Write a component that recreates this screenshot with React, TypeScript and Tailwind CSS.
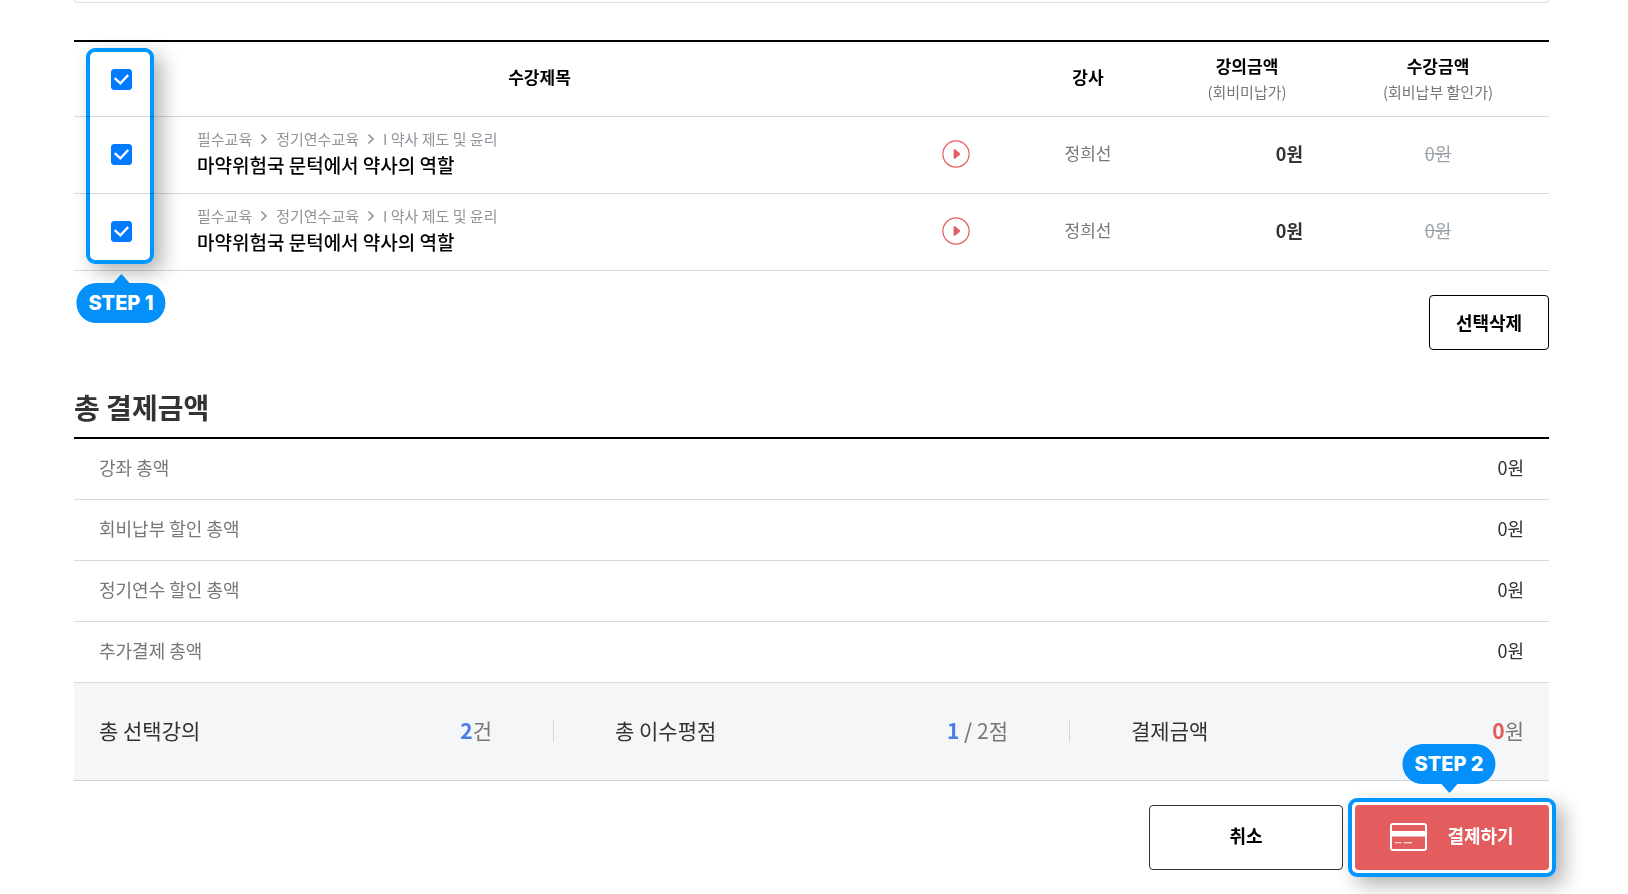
import { useState } from 'react'
import type { ReactNode } from 'react'

interface Course {
  id: number
  path: string[]
  title: string
  teacher: string
  price: string
  memberPrice: string
}

const COURSES: Course[] = [
  {
    id: 1,
    path: ['필수교육', '정기연수교육', 'I 약사 제도 및 윤리'],
    title: '마약위험국 문턱에서 약사의 역할',
    teacher: '정희선',
    price: '0원',
    memberPrice: '0원',
  },
  {
    id: 2,
    path: ['필수교육', '정기연수교육', 'I 약사 제도 및 윤리'],
    title: '마약위험국 문턱에서 약사의 역할',
    teacher: '정희선',
    price: '0원',
    memberPrice: '0원',
  },
]

const TOTALS = [
  { label: '강좌 총액', value: '0원' },
  { label: '회비납부 할인 총액', value: '0원' },
  { label: '정기연수 할인 총액', value: '0원' },
  { label: '추가결제 총액', value: '0원' },
]

interface CheckProps {
  label: string
  checked: boolean
  onChange: () => void
}

function Check({ label, checked, onChange }: CheckProps) {
  return (
    <span className="inline-grid align-middle">
      <input
        type="checkbox"
        aria-label={label}
        checked={checked}
        onChange={onChange}
        className="col-start-1 row-start-1 size-[21px] appearance-none rounded-[3px] border border-[#adb5bd] bg-white checked:border-[#007bff] checked:bg-[#007bff]"
      />
      <svg
        viewBox="0 0 21 21"
        className="pointer-events-none col-start-1 row-start-1 size-[21px]"
        fill="none"
        stroke="#fff"
        strokeWidth="2.3"
      >
        <path d="M3.7 9.2 9.4 14.4 17.2 6" />
      </svg>
    </span>
  )
}

function Chevron() {
  return (
    <svg viewBox="0 0 8 12" className="h-3 w-2" fill="none" stroke="#8b9299" strokeWidth="1.6">
      <path d="M1.5 1.5 6 6 1.5 10.5" />
    </svg>
  )
}

function PlayIcon() {
  return (
    <svg viewBox="0 0 28 28" className="size-7" fill="none">
      <circle cx="14" cy="14" r="13.1" stroke="#e35d5f" strokeWidth="1.2" />
      <path
        d="M11.6 10.1c0-.9.7-1.2 1.4-.8l4.6 3.8c.6.5.6 1.3 0 1.8l-4.6 3.8c-.7.4-1.4.1-1.4-.8z"
        fill="#e35d5f"
      />
    </svg>
  )
}

function CardIcon() {
  return (
    <svg viewBox="0 0 37 28" className="h-7 w-[37px]" fill="none" stroke="#fff">
      <rect x="1" y="1" width="35" height="26" rx="2" strokeWidth="2" />
      <path d="M1 10.7h35" strokeWidth="5.6" />
      <path d="M5 19.7h6.5M13.5 19.7h8.5" strokeWidth="1.1" />
    </svg>
  )
}

function StepBadge({ text, arrow }: { text: string; arrow: 'up' | 'down' }) {
  return (
    <div className="flex flex-col items-center">
      {arrow === 'up' && (
        <svg viewBox="0 0 16 9" className="h-[9px] w-4" fill="#0390fb">
          <path d="M0 9 7.2 .7q.8-.9 1.6 0L16 9z" />
        </svg>
      )}
      <span className="flex h-10 items-center whitespace-nowrap rounded-full bg-[#0390fb] px-3 font-['Inter',sans-serif] text-xl font-extrabold text-white">
        {text}
      </span>
      {arrow === 'down' && (
        <svg viewBox="0 0 16 9" className="h-[9px] w-4" fill="#0390fb">
          <path d="M0 0 7.2 8.3q.8.9 1.6 0L16 0z" />
        </svg>
      )}
    </div>
  )
}

function SummaryItem({ label, children }: { label: string; children: ReactNode }) {
  return (
    <div className="flex flex-1 items-center justify-between">
      <span className="text-[#333]">{label}</span>
      <span className="text-[#777]">{children}</span>
    </div>
  )
}

export default function App() {
  const [selected, setSelected] = useState<number[]>([1, 2])
  const allSelected = selected.length === COURSES.length

  const toggle = (id: number) => {
    setSelected(selected.includes(id) ? selected.filter(s => s !== id) : [...selected, id])
  }

  return (
    <main className="overflow-hidden bg-white pb-6 pl-[74px] pr-[79px] font-['Noto_Sans_CJK_KR',sans-serif] text-[17px] text-[#333]">
      <div className="h-[3px] rounded-b border border-t-0 border-[#dee2e6]" />

      <section className="relative mt-[37px]">
        <table className="w-full table-fixed border-collapse">
          <colgroup>
            <col className="w-[94px]" />
            <col />
            <col className="w-[98px]" />
            <col className="w-[158px]" />
            <col className="w-[160px]" />
            <col className="w-[222px]" />
          </colgroup>
          <thead>
            <tr className="h-[75px] border-b border-t-2 border-b-[#d9d9d9] border-t-black text-black">
              <th className="pb-1 font-normal">
                <Check
                  label="전체 선택"
                  checked={allSelected}
                  onChange={() => setSelected(allSelected ? [] : COURSES.map(c => c.id))}
                />
              </th>
              <th className="pb-1 font-bold">수강제목</th>
              <th />
              <th className="pb-1 font-bold">강사</th>
              <th className="font-bold leading-[26px]">
                강의금액
                <span className="block text-[15px] font-normal text-[#777]">(회비미납가)</span>
              </th>
              <th className="font-bold leading-[26px]">
                수강금액
                <span className="block text-[15px] font-normal text-[#777]">(회비납부 할인가)</span>
              </th>
            </tr>
          </thead>
          <tbody>
            {COURSES.map(course => (
              <tr key={course.id} className="h-[77px] border-b border-[#d9d9d9]">
                <td className="pb-1 text-center">
                  <Check
                    label={course.title}
                    checked={selected.includes(course.id)}
                    onChange={() => toggle(course.id)}
                  />
                </td>
                <td className="pb-1 pl-[29px]">
                  <div className="flex items-center text-[15px] leading-6 text-[#8f959b]">
                    {course.path.map((name, i) => (
                      <span key={name} className="flex items-center">
                        {i > 0 && (
                          <span className="px-2">
                            <Chevron />
                          </span>
                        )}
                        {name}
                      </span>
                    ))}
                  </div>
                  <div className="text-[19px] leading-7 font-medium text-black">{course.title}</div>
                </td>
                <td className="pb-0.5 pl-[31px]">
                  <button type="button" aria-label="미리보기" className="block cursor-pointer">
                    <PlayIcon />
                  </button>
                </td>
                <td className="pb-1 text-center text-[#777]">{course.teacher}</td>
                <td className="pb-1 pr-6 text-right text-lg font-bold">{course.price}</td>
                <td className="pb-1 text-center text-lg text-[#9ca3aa] line-through">
                  {course.memberPrice}
                </td>
              </tr>
            ))}
          </tbody>
        </table>

        {/* step 1 guide over the checkbox column */}
        <div className="pointer-events-none absolute left-3 top-2 h-[216px] w-[68px] rounded-[9px] border-4 border-[#0095ff] mix-blend-multiply shadow-[8px_8px_20px_rgba(0,0,0,0.3)]" />
        <div className="pointer-events-none absolute left-[47px] top-[234px] -translate-x-1/2">
          <StepBadge text="STEP 1" arrow="up" />
        </div>
      </section>

      <div className="mt-6 flex justify-end">
        <button
          type="button"
          className="h-[55px] w-[120px] cursor-pointer rounded border border-black text-lg font-bold text-black"
        >
          선택삭제
        </button>
      </div>

      <section className="mt-[35px]">
        <h2 className="pb-2 text-[28px] leading-[44px] font-bold">총 결제금액</h2>
        <dl className="border-t-2 border-black text-lg">
          {TOTALS.map(total => (
            <div
              key={total.label}
              className="flex h-[61px] items-center justify-between border-b border-[#d9d9d9] px-[25px] pb-1"
            >
              <dt className="text-[#777]">{total.label}</dt>
              <dd>{total.value}</dd>
            </div>
          ))}
        </dl>
        <div className="flex h-[98px] items-center gap-[61px] border-b border-[#d0d3d6] bg-[#f4f6f8] px-[25px] text-[21px]">
          <SummaryItem label="총 선택강의">
            <b className="text-[#4a7de8]">{selected.length}</b>건
          </SummaryItem>
          <span className="h-[22px] w-px bg-[#d5d8db]" />
          <SummaryItem label="총 이수평점">
            <b className="text-[#4a7de8]">1</b> <span className="font-medium">/</span> 2점
          </SummaryItem>
          <span className="h-[22px] w-px bg-[#d5d8db]" />
          <SummaryItem label="결제금액">
            <b className="text-[#e35d5f]">0</b>원
          </SummaryItem>
        </div>
      </section>

      <div className="mt-6 flex justify-end gap-3">
        <button
          type="button"
          className="h-[65px] w-[194px] cursor-pointer rounded border border-[#333] pb-1 text-lg font-bold text-black"
        >
          취소
        </button>
        <div className="relative">
          <button
            type="button"
            className="flex h-[65px] w-[194px] cursor-pointer items-center justify-center gap-5 rounded bg-[#e35d5f] text-lg font-bold text-white"
          >
            <CardIcon />
            <span className="pb-1">결제하기</span>
          </button>
          {/* step 2 guide around the pay button */}
          <div className="pointer-events-none absolute -inset-[7px] rounded-[9px] border-4 border-[#0095ff] shadow-[8px_8px_20px_rgba(0,0,0,0.3)]" />
          <div className="pointer-events-none absolute bottom-[77px] left-[94px] -translate-x-1/2">
            <StepBadge text="STEP 2" arrow="down" />
          </div>
        </div>
      </div>
    </main>
  )
}
